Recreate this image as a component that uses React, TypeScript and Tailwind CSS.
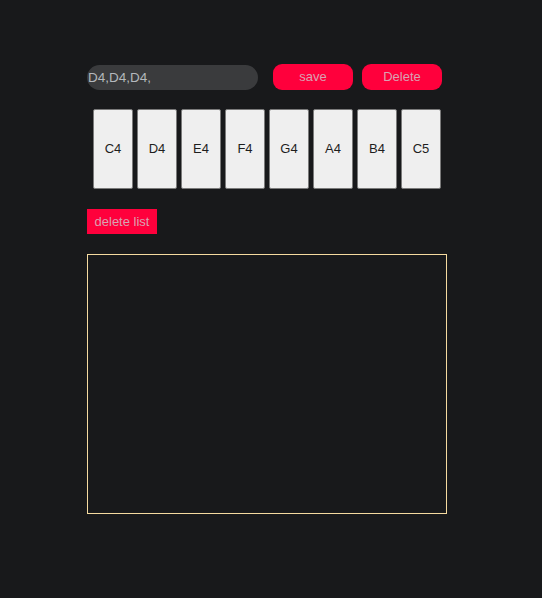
import React from 'react';

const notes = ['C4', 'D4', 'E4', 'F4', 'G4', 'A4', 'B4', 'C5'];

export default function App() {
  const [seq, setSeq] = React.useState('D4,D4,D4,');

  return (
    <div
      className="min-h-[598px] w-full bg-[#18191b] pl-[87px] pt-[64px]"
      style={{ fontFamily: '"Liberation Sans", Arial, sans-serif' }}
    >
      <div className="flex items-center">
        <input
          value={seq}
          onChange={(e) => setSeq(e.target.value)}
          className="h-[25px] w-[171px] rounded-full bg-[#3a3b3d] pl-[1px] text-[13.5px] text-[#b4b8bc] outline-none"
        />
        <button className="ml-[15px] h-[26px] w-[80px] rounded-[9px] bg-[#ff003c] text-[13px] text-[#d9a2b2]">
          save
        </button>
        <button className="ml-[9px] h-[26px] w-[80px] rounded-[9px] bg-[#ff003c] text-[13px] text-[#d9a2b2]">
          Delete
        </button>
      </div>

      <div className="mt-[19px] flex gap-[4px] pl-[6px]">
        {notes.map((n) => (
          <button
            key={n}
            onClick={() => setSeq((s) => s + n + ',')}
            className="flex h-[80px] w-[40px] items-center justify-center rounded-[2px] border border-[#7a7a7a] bg-[#efefef] text-[13px] text-[#1e1e1e]"
          >
            {n}
          </button>
        ))}
      </div>

      <button className="mt-[20px] h-[25px] w-[70px] bg-[#ff003c] text-[13px] text-[#d9a2b2]">
        delete list
      </button>

      <div className="mt-[20px] h-[260px] w-[360px] border border-[#f5dba0]" />
    </div>
  );
}
